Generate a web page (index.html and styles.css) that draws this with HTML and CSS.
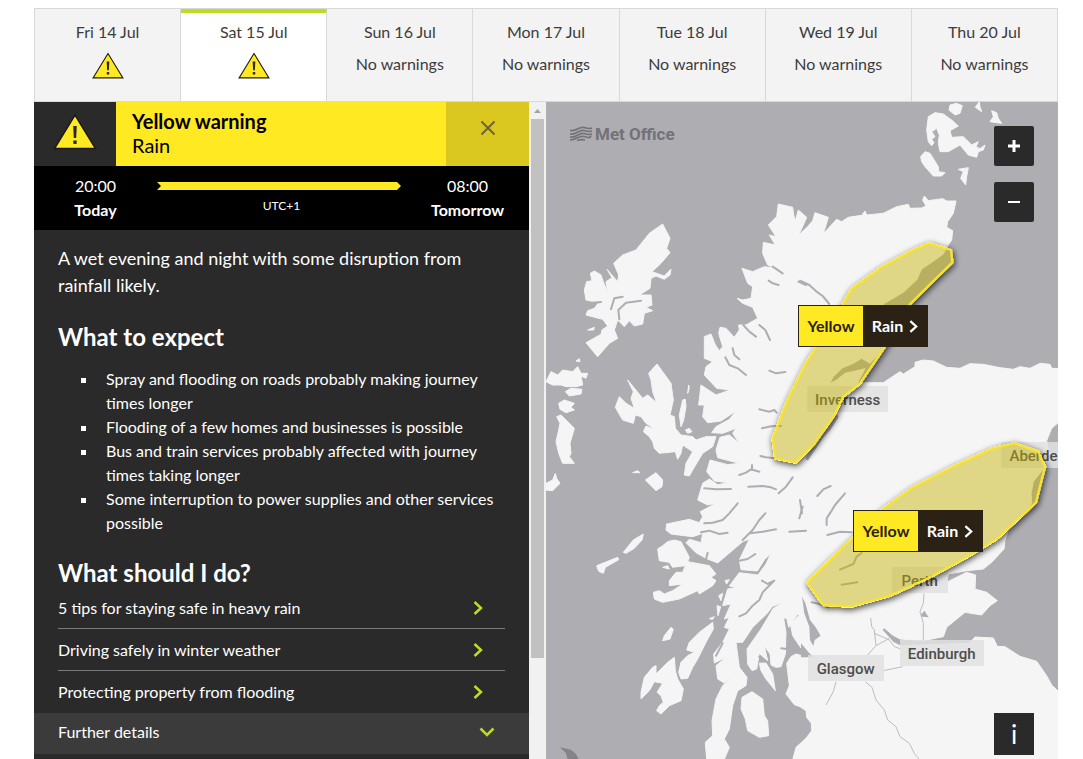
FILE: index.html
```html
<!DOCTYPE html>
<html lang="en">
  <head>
    <meta charset="UTF-8" />
    <meta name="viewport" content="width=device-width, initial-scale=1.0" />
    <title>UK weather warnings</title>
    <link rel="stylesheet" href="styles.css">
  </head>
  <body>
    <svg class="defs" aria-hidden="true">
      <symbol id="warning" viewBox="0 0 44 37">
        <path d="M22 2 L42.500 35.500 H1.500 Z" fill="#ffe923" stroke="#1d1a10" stroke-width="1.500" />
        <path d="M20.200 13 h3.600 l-.6 12 h-2.400 Z" fill="#2a2a2a" />
        <rect x="20.300" y="27.500" width="3.400" height="3.400" fill="#2a2a2a" />
      </symbol>
      <symbol id="chevron" viewBox="0 0 10 16">
        <path d="M1.500 2 L8 8 L1.500 14" fill="none" stroke="currentColor" stroke-width="2.500" />
      </symbol>
    </svg>

    <main class="warnings">
      <nav class="days">
        <button class="day">
          <span>Fri 14 Jul</span>
          <svg class="day-icon" role="img" aria-label="Yellow warning"><use href="#warning" /></svg>
        </button>
        <button class="day active">
          <span>Sat 15 Jul</span>
          <svg class="day-icon" role="img" aria-label="Yellow warning"><use href="#warning" /></svg>
        </button>
        <button class="day"><span>Sun 16 Jul</span><span>No warnings</span></button>
        <button class="day"><span>Mon 17 Jul</span><span>No warnings</span></button>
        <button class="day"><span>Tue 18 Jul</span><span>No warnings</span></button>
        <button class="day"><span>Wed 19 Jul</span><span>No warnings</span></button>
        <button class="day"><span>Thu 20 Jul</span><span>No warnings</span></button>
      </nav>

      <div class="content">
        <div class="side">
          <section class="panel">
            <header class="panel-header">
              <div class="panel-icon"><svg width="44" height="37"><use href="#warning" /></svg></div>
              <div class="panel-title">
                <h1>Yellow warning</h1>
                <p>Rain</p>
              </div>
              <button class="close-btn" aria-label="Close">
                <svg width="16" height="16" viewBox="0 0 16 16">
                  <path d="M1.500 1.500 L14.500 14.500 M14.500 1.500 L1.500 14.500" stroke="#6b6435" stroke-width="2" />
                </svg>
              </button>
            </header>

            <div class="period">
              <div class="period-time"><span>20:00</span><strong>Today</strong></div>
              <div class="period-bar">
                <div class="bar"></div>
                <small>UTC+1</small>
              </div>
              <div class="period-time"><span>08:00</span><strong>Tomorrow</strong></div>
            </div>

            <div class="details">
              <p class="intro">A wet evening and night with some disruption from rainfall likely.</p>
              <h2>What to expect</h2>
              <ul class="expect">
                <li>Spray and flooding on roads probably making journey times longer</li>
                <li>Flooding of a few homes and businesses is possible</li>
                <li>Bus and train services probably affected with journey times taking longer</li>
                <li>Some interruption to power supplies and other services possible</li>
              </ul>
              <h2>What should I do?</h2>
              <div class="links">
                <a href="#">5 tips for staying safe in heavy rain <svg width="10" height="16"><use href="#chevron" /></svg></a>
                <a href="#">Driving safely in winter weather <svg width="10" height="16"><use href="#chevron" /></svg></a>
                <a href="#">Protecting property from flooding <svg width="10" height="16"><use href="#chevron" /></svg></a>
              </div>
            </div>

            <button class="further">
              Further details
              <svg width="16" height="10" viewBox="0 0 16 10">
                <path d="M1.500 1.500 L8 8 L14.500 1.500" fill="none" stroke="#bedb25" stroke-width="2.500" />
              </svg>
            </button>
          </section>

          <div class="scrollbar">
            <svg width="17" height="17" viewBox="0 0 17 17"><path d="M8.500 7 L12 11 H5 Z" fill="#a3a3a3" /></svg>
            <div class="thumb"></div>
          </div>
        </div>

        <section class="map">
          <svg class="map-canvas" viewBox="0 6 1536 1971" preserveAspectRatio="xMinYMin slice">
            <!-- shadow around the outside of an area only -->
            <filter id="area-shadow" x="-20%" y="-20%" width="140%" height="140%">
              <feComponentTransfer in="SourceAlpha" result="solid">
                <feFuncA type="linear" slope="10" />
              </feComponentTransfer>
              <feGaussianBlur stdDeviation="9" />
              <feOffset dx="3" dy="6" />
              <feComposite in2="solid" operator="out" result="shadow" />
              <feComponentTransfer in="shadow" result="soft">
                <feFuncA type="linear" slope="0.7" />
              </feComponentTransfer>
              <feMerge>
                <feMergeNode in="soft" />
                <feMergeNode in="SourceGraphic" />
              </feMerge>
            </filter>

            <!-- mainland -->
            <path class="land" d="M697 312 L740 322 L743 345 L748 362 L757 330 L782 352 L770 380 L758 405 L785 380 L800 362 L807 338 L847 352 L832 402 L847 385 L872 358 L887 365 L907 352 L947 346 L957 333 L962 345 L1012 340 L1052 320 L1087 313 L1092 325 L1127 324 L1140 318 L1130 300 L1135 288 L1147 302 L1190 296 L1202 303 L1230 303 L1222 340 L1205 365 L1202 382 L1220 392 L1217 420 L1202 442 L1192 462 L1160 485 L1127 507 L1112 540 L1072 577 L1012 612 L1000 660 L1017 740 L972 790 L947 775 L922 790 L890 803 L862 830 L850 852 L872 840 L897 820 L932 812 L957 806 L934 850 L952 848 L1012 848 L1062 815 L1072 822 L1107 800 L1107 787 L1132 780 L1162 783 L1202 802 L1242 805 L1272 791 L1312 793 L1362 803 L1402 808 L1422 800 L1452 805 L1482 790 L1512 793 L1517 805 L1540 806 V965 L1517 985 L1502 1022 L1510 1060 L1497 1100 L1462 1145 L1455 1180 L1457 1210 L1430 1250 L1387 1290 L1377 1322 L1374 1347 L1337 1387 L1312 1407 L1262 1412 L1207 1422 L1202 1447 L1262 1417 L1289 1425 L1287 1467 L1322 1477 L1354 1502 L1332 1517 L1307 1545 L1257 1537 L1202 1582 L1192 1610 L1132 1622 L1062 1617 L1040 1605 L1015 1584 L1008 1589 L1042 1627 L1062 1637 L1270 1630 L1287 1611 L1342 1614 L1354 1639 L1377 1640 L1422 1669 L1472 1684 L1502 1727 L1517 1755 L1540 1777 V1980 H740 L750 1942 L780 1915 L797 1892 L796 1870 L782 1852 L780 1832 L762 1820 L745 1814 L720 1782 L730 1757 L722 1690 L735 1670 L750 1662 L787 1672 L762 1640 L740 1607 L733 1572 L760 1545 L755 1542 L728 1582 L722 1554 L713 1555 L720 1597 L718 1662 L705 1700 L690 1702 L675 1695 L672 1662 L655 1637 L665 1682 L640 1660 L632 1707 L618 1712 L605 1692 L603 1647 L645 1587 L682 1525 L715 1507 L680 1519 L662 1542 L620 1582 L590 1627 L570 1627 L580 1702 L603 1732 L600 1757 L575 1772 L560 1817 L550 1887 L535 1917 L550 1942 L535 1978 H482 L478 1927 L500 1907 L498 1862 L510 1797 L530 1757 L570 1717 L535 1749 L515 1737 L510 1697 L540 1672 L505 1689 L503 1662 L530 1627 L550 1587 L535 1582 L550 1552 L535 1557 L555 1512 L530 1517 L545 1467 L570 1463 L550 1458 L580 1418 L636 1425 L660 1392 L674 1362 L656 1378 L634 1413 L585 1409 L580 1380 L610 1317 L590 1325 L515 1389 L480 1375 L450 1358 L420 1328 L430 1318 L465 1328 L470 1300 L440 1310 L375 1302 L360 1290 L362 1272 L430 1258 L460 1268 L470 1250 L463 1235 L510 1210 L485 1215 L455 1200 L470 1150 L490 1137 L515 1154 L548 1148 L505 1143 L482 1115 L492 1080 L545 1094 L580 1090 L515 1073 L510 1050 L522 1012 L550 1005 L580 1030 L560 1000 L570 985 L530 1000 L497 998 L510 980 L550 958 L570 933 L525 963 L485 968 L470 950 L475 915 L458 915 L465 855 L510 885 L552 870 L512 865 L475 825 L480 800 L500 785 L475 775 V710 L495 702 L508 735 L520 752 L530 740 L518 700 L522 682 L540 685 L565 712 L580 690 L578 675 L600 675 L635 655 L620 622 L590 610 L573 595 L590 600 L615 595 L620 560 L605 550 L588 505 L620 515 L655 500 L690 505 L665 495 L650 460 L652 427 L688 435 L670 405 L690 410 L667 375 L692 350 Z" />

            <!-- western isles -->
            <path class="land" d="M350 372 L372 415 L362 445 L372 458 L345 490 L318 515 L355 528 L375 507 L372 525 L355 538 L330 528 L315 535 L312 565 L280 585 L315 585 L318 615 L300 622 L320 632 L295 640 L290 672 L265 678 L250 662 L235 680 L215 660 L205 690 L215 715 L190 730 L155 770 L120 728 L165 703 L168 690 L185 678 L170 658 L120 645 L125 632 L145 625 L158 608 L120 600 L115 570 L122 545 L138 542 L133 520 L145 513 L165 525 L172 545 L185 580 L180 545 L198 533 L183 508 L215 545 L218 525 L203 490 L230 465 L270 450 L310 400 Z" />
            <path class="land" d="M0 845 L15 815 L35 825 L50 810 L80 815 L95 800 L105 820 L125 820 L120 835 L105 828 L110 855 L90 860 L60 860 L45 855 L20 855 Z M58 875 L75 865 L108 868 L105 882 L70 888 Z M38 910 L55 900 L85 910 L75 922 L85 930 L60 938 L42 928 Z M32 950 L45 945 L60 960 L85 985 L72 1030 L75 1060 L70 1070 L85 1090 L50 1090 L38 1060 L30 1025 L38 990 L42 970 Z M0 1150 L20 1140 L28 1120 L32 1135 L42 1150 L20 1172 L0 1170 Z M90 783 L100 776 L102 785 Z M125 690 L145 682 L143 690 Z" />

            <!-- skye and the small isles -->
            <path class="land" d="M333 792 L350 815 L375 850 L382 900 L372 945 L385 950 L388 985 L405 1005 L440 1010 L450 1020 L480 1010 L510 1010 L500 1040 L470 1060 L440 1110 L430 1128 L415 1125 L420 1090 L440 1055 L410 1035 L405 1060 L395 1078 L388 1055 L340 1060 L325 1045 L320 1025 L310 1010 L292 995 L300 978 L330 990 L300 970 L285 950 L268 945 L262 970 L230 960 L208 922 L220 890 L240 910 L265 925 L255 895 L262 875 L245 840 L290 895 L305 885 L332 908 L320 875 L315 840 L308 820 Z" />
            <path class="land" d="M400 945 L410 900 L418 898 L420 920 L413 960 L405 980 Z M428 855 L430 865 L425 880 Z M418 990 L430 985 L438 995 L425 1000 Z M298 1140 L330 1118 L350 1140 L348 1160 L330 1172 Z M260 1118 L275 1112 L282 1118 Z M232 1357 L262 1320 L292 1302 L288 1320 L265 1345 L240 1360 Z M152 1397 L165 1392 L215 1372 L218 1379 L178 1402 L172 1420 L158 1414 Z" />

            <!-- mull, jura, islay, arran -->
            <path class="land" d="M335 1347 L350 1337 L365 1325 L385 1320 L405 1325 L430 1372 L425 1385 L490 1397 L510 1422 L495 1432 L510 1442 L500 1457 L460 1482 L455 1472 L400 1497 L350 1507 L325 1497 L322 1477 L340 1472 L355 1482 L380 1472 L410 1452 L370 1457 L370 1442 L390 1417 L410 1417 L418 1397 L380 1402 L370 1387 L340 1382 Z M350 1402 L365 1397 L370 1407 Z M537 1442 L550 1439 L542 1452 Z M518 1487 L530 1480 L525 1502 Z M513 1517 L524 1520 L516 1547 Z M490 1556 L505 1550 L500 1558 Z M375 1582 L382 1588 L372 1617 L350 1622 L355 1607 Z" />
            <path class="land" d="M500 1567 L502 1587 L480 1627 L455 1677 L440 1702 L425 1735 L405 1737 L398 1717 L405 1687 L425 1667 L445 1657 L422 1650 L430 1627 L460 1597 Z" />
            <path class="land" d="M385 1672 L388 1712 L395 1737 L412 1767 L405 1802 L370 1817 L345 1842 L332 1832 L340 1817 L352 1807 L345 1787 L333 1777 L350 1750 L325 1745 L310 1772 L285 1797 L285 1777 L295 1732 L320 1702 L330 1697 L330 1722 L365 1687 Z" />
            <path class="land" d="M618 1775 L650 1797 L655 1847 L665 1862 L668 1907 L640 1912 L605 1892 L598 1857 L585 1827 L588 1792 Z M640 1690 L660 1689 L680 1722 L688 1772 L660 1737 L645 1712 Z" />

            <!-- orkney -->
            <path class="land" d="M1147 50 L1167 38 L1192 42 L1217 60 L1237 78 L1212 92 L1217 112 L1252 110 L1277 135 L1297 125 L1290 140 L1302 146 L1317 135 L1312 150 L1297 155 L1292 172 L1267 165 L1242 135 L1207 155 L1182 155 L1177 130 L1180 105 L1172 85 L1157 95 L1167 110 L1157 118 L1164 128 L1157 137 L1147 125 L1142 90 Z M1124 170 L1137 155 L1152 160 L1177 200 L1178 215 L1197 218 L1187 228 L1162 228 L1137 200 L1127 185 Z M1212 15 L1232 10 L1249 17 L1242 40 L1227 45 L1209 30 Z M1300 5 L1302 20 L1307 35 L1288 22 Z M1237 208 L1267 203 L1262 230 L1259 255 L1244 235 L1252 215 Z M1337 32 L1352 38 L1357 55 L1367 70 L1352 68 L1332 65 L1342 50 Z" />
            <path class="shade" d="M42 1942 L75 1949 L90 1962 L98 1978 H65 L60 1960 Z" />

            <!-- lochs -->
            <g class="loch">
              <path d="M195 628 L205 595 L230 590 M220 658 L217 630 L240 608 L285 602 M140 608 L165 606" />
              <path d="M592 675 L610 695 L630 710 M640 675 L658 690 L672 720 M538 772 L550 795 L575 805 L600 825 M560 745 L565 765 L580 778 M670 812 L690 820 L718 816" />
              <path d="M640 928 L670 935 L685 930 L692 938 M648 985 L675 979 L705 978 M643 1068 L660 1072 L685 1075 M580 1125 L600 1118 L615 1108 L640 1115 M618 1095 V1110" />
              <path d="M607 1160 L650 1158 L675 1162 L690 1168 M740 1132 L720 1160 L698 1180 M475 1165 L510 1168 L555 1167 M575 1210 L550 1240 L530 1260 L500 1268 L475 1270 M770 1220 L760 1255 M730 1295 L780 1292" />
              <path d="M590 1320 L620 1290 L640 1260 L658 1240 M612 1300 L650 1295 L690 1288 M465 1297 L490 1292 L520 1302 L545 1298 M480 1378 L485 1358" />
              <path d="M814 1188 L832 1168 L854 1158 M897 1180 L867 1215 L855 1235 L842 1255 V1275 M844 1305 L882 1295 L917 1297 M762 1200 L768 1240" />
              <path d="M668 542 L680 550 L698 555 M757 545 L780 555 M680 500 L710 520" />
              <path d="M648 1442 L665 1452 L685 1442 L650 1477 L640 1500 L620 1517 L600 1540 L580 1549 M580 1382 L605 1377 L628 1362 M510 1667 L530 1630 M640 1670 L670 1692" />
              <path d="M882 1409 L922 1392 L932 1370 L947 1359 M887 1454 L934 1447 M797 1507 L820 1512 L847 1522 M706 1645 L780 1655" />
              <path d="M762 542 L790 555 L812 575 L830 588 L850 612" />
            </g>
            <path class="loch wide" d="M784 1075 L827 1010 L850 985 L872 950" />
            <path class="water" d="M768 1490 L778 1510 L792 1560 L808 1580 L824 1607 L806 1620 L802 1638 L792 1620 L790 1580 L775 1540 Z M765 1630 L790 1660 L805 1672 H765 Z M1124 1545 L1135 1532 L1148 1552 L1128 1550 Z" />

            <!-- main roads -->
            <path class="road" d="M974 1554 L977 1580 L985 1590 L990 1637 L965 1665 M985 1600 L1012 1612 L1030 1620 L1045 1640 L1062 1646 M990 1637 L1030 1615 M1134 1480 L1132 1510 L1122 1535 L1132 1570 V1620 M1012 1712 L1070 1700 M870 1745 L862 1775 L840 1815 M958 1745 L978 1762 L990 1800 L1015 1830 L1025 1860 L1050 1880 L1062 1910 L1090 1930 L1105 1960 L1120 1978" />

            <g class="place">
              <rect x="784" y="858" width="242" height="78" /><text x="905" y="914">Inverness</text>
              <rect x="1366" y="1026" width="242" height="78" /><text x="1487" y="1082">Aberdeen</text>
              <rect x="1038" y="1401" width="168" height="78" /><text x="1121" y="1457">Perth</text>
              <rect x="1062" y="1620" width="252" height="78" /><text x="1187" y="1676">Edinburgh</text>
              <rect x="786" y="1665" width="228" height="78" /><text x="899" y="1721">Glasgow</text>
            </g>

            <g class="area">
              <path d="M1150 430 L1215 450 L1219 487 L1092 612 L1017 740 L942 850 L892 890 L862 950 L802 1035 L748 1087 L688 1075 L680 1015 L725 900 L780 790 L812 740 L892 610 L917 567 L1002 505 L1092 455 Z" />
              <path d="M1405 1030 L1477 1055 L1497 1100 L1470 1207 L1352 1317 L1262 1372 L1142 1437 L1032 1487 L917 1519 L832 1515 L784 1447 L907 1327 L1010 1228 L1097 1165 L1222 1100 L1342 1045 Z" />
            </g>
          </svg>

          <div class="logo">
            <svg width="23" height="16" viewBox="0 0 23 16">
              <path d="M0 4.500 C7 6 9 0 14 1.500 S20 3 22 2 M0 8 C7 9 9 3 14 4.500 S20 6 22 5 M0 11 C7 12 9 6 14 7.500 S20 9 22 8 M0 14 C7 14 9 9 14 10.500 S20 12 21 10 M7 14.500 C10 14 11 13 15 14" fill="none" stroke="#737277" stroke-width="1.700" />
            </svg>
            Met Office
          </div>

          <button class="marker marker-north">
            <span class="level">Yellow</span>
            <span class="type">Rain <svg width="9" height="15"><use href="#chevron" /></svg></span>
          </button>
          <button class="marker marker-south">
            <span class="level">Yellow</span>
            <span class="type">Rain <svg width="9" height="15"><use href="#chevron" /></svg></span>
          </button>

          <div class="controls">
            <button class="map-btn" aria-label="Zoom in">
              <svg width="14" height="14"><path d="M7 1 V13 M1 7 H13" stroke="#fff" stroke-width="3" /></svg>
            </button>
            <button class="map-btn" aria-label="Zoom out">
              <svg width="14" height="14"><path d="M1 7 H13" stroke="#fff" stroke-width="2" /></svg>
            </button>
            <button class="map-btn info-btn">i</button>
          </div>
        </section>
      </div>
    </main>
  </body>
</html>
```
FILE: styles.css
```css
:root {
  --yellow: #ffe923;
  --green: #bedb25;
  --dark: #2a2a2a;
  --dark-2: #3b3b3b;
  --sea: #aeadb2;
  --land: #f5f5f5;
  --border: #d8d8d8;
}

* {
  margin: 0;
  padding: 0;
  box-sizing: border-box;
}

body {
  background: #fff;
  color: #fff;
  font-family: Lato, "Open Sans", sans-serif;
  font-size: 16px;
  line-height: 24px;
}

button {
  border: none;
  font: inherit;
  color: inherit;
  cursor: pointer;
}

.defs {
  position: absolute;
  width: 0;
  height: 0;
}

.warnings {
  height: 100vh;
  padding: 8px 25px 0 34px;
  display: flex;
  flex-direction: column;
  overflow: hidden;
}

/* Day tabs */
.days {
  display: flex;
  border: 1px solid var(--border);
}

.day {
  flex: 1;
  height: 92px;
  padding-top: 11px;
  display: flex;
  flex-direction: column;
  align-items: center;
  gap: 8px;
  background: #f3f3f3;
  color: #3c3c3c;
  border-right: 1px solid var(--border);
}

.day:last-child {
  border-right: none;
}

.day.active {
  background: #fff;
  padding-top: 7px;
  border-top: 4px solid var(--green);
}

.day-icon {
  width: 32px;
  height: 27px;
}

.content {
  flex: 1;
  min-height: 0;
  display: flex;
}

.side {
  flex: 1;
  display: flex;
}

/* Warning panel */
.panel {
  flex: 1;
  overflow: hidden;
  background: var(--dark);
}

.panel-header {
  height: 64px;
  display: flex;
}

.panel-icon {
  width: 82px;
  padding-top: 11px;
  text-align: center;
}

.panel-title {
  flex: 1;
  padding: 7px 16px;
  background: var(--yellow);
  color: #000;
  font-size: 20px;
}

.panel-title h1 {
  font-size: 20px;
  font-weight: 700;
}

.close-btn {
  width: 83px;
  padding-bottom: 8px;
  background: #dac821;
}

.period {
  height: 64px;
  padding: 8px 0;
  display: flex;
  background: #000;
}

.period-time {
  width: 123px;
  display: flex;
  flex-direction: column;
  align-items: center;
}

.period-bar {
  flex: 1;
  padding-top: 8px;
  text-align: center;
}

.bar {
  height: 8px;
  margin: 0 5px 2px 0;
  background: var(--yellow);
  clip-path: polygon(0 0, calc(100% - 4px) 0, 100% 50%, calc(100% - 4px) 100%, 0 100%, 4px 50%);
}

.period-bar small {
  font-size: 12px;
}

.details {
  padding: 15px 24px 0;
}

.intro {
  font-size: 18px;
  line-height: 27px;
}

.details h2 {
  margin-top: 24px;
  font-size: 24px;
  line-height: 27px;
}

.expect {
  margin-top: 17px;
  padding-left: 40px;
  list-style: square;
}

.expect li {
  padding-left: 8px;
}

.links {
  padding-top: 1px;
}

.links a {
  height: 42px;
  padding: 0 22px 0 0;
  display: flex;
  align-items: center;
  justify-content: space-between;
  border-bottom: 1px solid #7a7a7a;
  color: #fff;
  text-decoration: none;
}

.links a:last-child {
  border-bottom: none;
}

.links svg {
  color: var(--green);
}

.further {
  width: 100%;
  height: 41px;
  padding: 0 34px 3px 24px;
  display: flex;
  align-items: center;
  justify-content: space-between;
  background: var(--dark-2);
}

.scrollbar {
  width: 17px;
  padding: 0 2px;
  display: flex;
  flex-direction: column;
  align-items: center;
  background: #f1f1f1;
}

.thumb {
  width: 100%;
  height: 82%;
  background: #c1c1c1;
}

/* Map */
.map {
  flex: 1;
  position: relative;
  overflow: hidden;
  background: var(--sea);
}

.map-canvas {
  width: 100%;
  height: 100%;
  display: block;
}

.land {
  fill: var(--land);
  stroke: var(--land);
  stroke-width: 3;
  stroke-linejoin: round;
}

.shade {
  fill: #848388;
}

.water {
  fill: var(--sea);
}

.loch {
  fill: none;
  stroke: var(--sea);
  stroke-width: 6;
  stroke-linecap: round;
  stroke-linejoin: round;
}

.wide {
  stroke-width: 11;
}

.road {
  fill: none;
  stroke: #bdbcc0;
  stroke-width: 3;
}

.place rect {
  fill: #e0e0e0;
  fill-opacity: 0.85;
}

.place text {
  fill: #4d4d4d;
  font-family: Roboto, sans-serif;
  font-size: 45px;
  font-weight: 500;
  text-anchor: middle;
}

.area path {
  fill: rgba(197, 178, 0, 0.46);
  stroke: #f9e42c;
  stroke-width: 7;
  stroke-linejoin: round;
  filter: url(#area-shadow);
  color-interpolation-filters: sRGB;
}

.logo {
  position: absolute;
  top: 20px;
  left: 24px;
  display: flex;
  align-items: center;
  gap: 2px;
  color: #737277;
  font-family: Roboto, sans-serif;
  font-size: 17px;
  font-weight: 700;
}

.marker {
  position: absolute;
  width: 130px;
  height: 42px;
  display: flex;
  border: 1px solid #2b2115;
  background: #2b2115;
  font-weight: 700;
  line-height: 40px;
}

.marker-north {
  top: 203px;
  left: 252px;
}

.marker-south {
  top: 408px;
  left: 307px;
}

.level {
  width: 64px;
  background: var(--yellow);
  color: #2b2115;
}

.type {
  flex: 1;
  display: flex;
  align-items: center;
  justify-content: center;
  gap: 6px;
}

.controls {
  position: absolute;
  top: 24px;
  right: 24px;
  bottom: 4px;
  display: flex;
  flex-direction: column;
  gap: 16px;
}

.map-btn {
  width: 40px;
  height: 40px;
  display: flex;
  align-items: center;
  justify-content: center;
  background: var(--dark);
  border-radius: 2px;
}

.info-btn {
  height: 42px;
  margin-top: auto;
  font-size: 26px;
  border-radius: 0;
}
```
